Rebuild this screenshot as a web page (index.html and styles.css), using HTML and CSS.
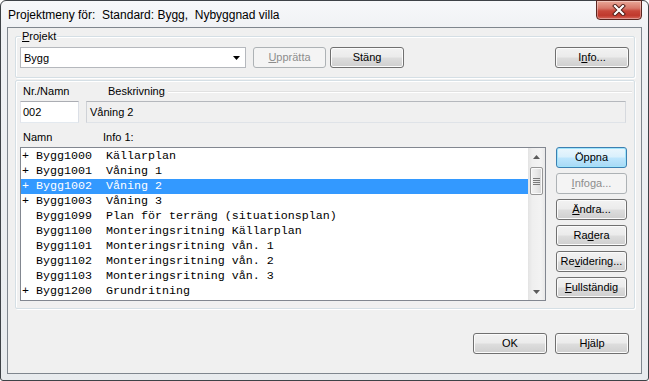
FILE: index.html
```html
<!DOCTYPE html>
<html lang="sv">
<head>
<meta charset="utf-8">
<title>Projektmeny</title>
<link rel="stylesheet" href="styles.css">
</head>
<body>
<div class="window">
  <div class="titlebar">
    <span class="title">Projektmeny för:&nbsp; Standard: Bygg,&nbsp; Nybyggnad villa</span>
    <div class="close">
      <svg width="14" height="12" viewBox="0 0 14 12">
        <path d="M3 2 L11 10 M11 2 L3 10" stroke="#4a1a14" stroke-width="4" stroke-linecap="square"/>
        <path d="M3 2 L11 10 M11 2 L3 10" stroke="#ffffff" stroke-width="2.2" stroke-linecap="square"/>
      </svg>
    </div>
  </div>
  <div class="client">
    <div class="group g1">
      <span class="glabel"><u>P</u>rojekt</span>
      <div class="row">
        <div class="combo">
          <span class="val">Bygg</span>
          <svg width="7" height="4" viewBox="0 0 7 4"><path d="M0 0 H7 L3.5 4 Z" fill="#000"/></svg>
        </div>
        <div class="btn dis upp"><u>U</u>pprätta</div>
        <div class="btn stang">Stäng</div>
        <div class="btn info">I<u>n</u>fo...</div>
      </div>
    </div>
    <div class="group g2">
      <div class="lab1">
        <span class="nr">Nr./Namn</span>
        <span>Beskrivning</span>
        <span class="etch"></span>
      </div>
      <div class="fields">
        <div class="field nrf">002</div>
        <div class="field besk">Våning 2</div>
      </div>
      <div class="lab2">
        <span class="nm">Namn</span>
        <span>Info 1:</span>
      </div>
      <div class="listrow">
        <div class="list">
          <div class="items">
            <div class="item">+ Bygg1000  Källarplan</div>
            <div class="item">+ Bygg1001  Våning 1</div>
            <div class="item sel">+ Bygg1002  Våning 2</div>
            <div class="item">+ Bygg1003  Våning 3</div>
            <div class="item">  Bygg1099  Plan för terräng (situationsplan)</div>
            <div class="item">  Bygg1100  Monteringsritning Källarplan</div>
            <div class="item">  Bygg1101  Monteringsritning vån. 1</div>
            <div class="item">  Bygg1102  Monteringsritning vån. 2</div>
            <div class="item">  Bygg1103  Monteringsritning vån. 3</div>
            <div class="item">+ Bygg1200  Grundritning</div>
          </div>
          <div class="sb">
            <div class="sb-btn"><svg width="7" height="4" viewBox="0 0 7 4"><path d="M0 4 H7 L3.5 0 Z" fill="#5b5b5b"/></svg></div>
            <div class="thumb">
              <svg width="7" height="7" viewBox="0 0 7 7"><path d="M0 0.5 H7 M0 2.5 H7 M0 4.5 H7 M0 6.5 H7" stroke="#7a7a7a" stroke-width="1"/></svg>
            </div>
            <div class="track"></div>
            <div class="sb-btn"><svg width="7" height="4" viewBox="0 0 7 4"><path d="M0 0 H7 L3.5 4 Z" fill="#5b5b5b"/></svg></div>
          </div>
        </div>
        <div class="side">
          <div class="btn def">Öppna</div>
          <div class="btn dis"><u>I</u>nfoga...</div>
          <div class="btn"><u>Ä</u>ndra...</div>
          <div class="btn">Ra<u>d</u>era</div>
          <div class="btn">Re<u>v</u>idering...</div>
          <div class="btn"><u>F</u>ullständig</div>
        </div>
      </div>
    </div>
    <div class="footer">
      <div class="btn">OK</div>
      <div class="btn">Hjälp</div>
    </div>
  </div>
</div>
</body>
</html>
```

FILE: styles.css
```css
* { box-sizing: border-box; }
html, body { margin: 0; padding: 0; }
body {
  width: 649px;
  height: 381px;
  overflow: hidden;
  background: #ffffff;
  font-family: "Liberation Sans", Arial, sans-serif;
  font-size: 11px;
  color: #000;
}
u { text-decoration: underline; text-underline-offset: 1px; }

.window {
  width: 649px;
  height: 381px;
  border: 1px solid #3e4247;
  border-radius: 6px 6px 3px 3px;
  background: linear-gradient(180deg, #f7f8fa 0px, #eff1f4 30px, #e8ebee 100%);
  display: flex;
  flex-direction: column;
}
.titlebar {
  flex: none;
  height: 26px;
  display: flex;
  align-items: flex-start;
}
.title {
  margin: 6px 0 0 7px;
  font-size: 12px;
  line-height: 16px;
  color: #000;
}
.close {
  margin: -1px 6px 0 auto;
  width: 46px;
  height: 20px;
  border: 1px solid #5b2620;
  border-radius: 0 0 4px 4px;
  background: linear-gradient(180deg, #e9a898 0%, #d7786a 40%, #c8473a 55%, #c0392d 80%, #d5665a 100%);
  box-shadow: inset 0 0 0 1px rgba(255,255,255,0.35);
  display: flex;
  align-items: center;
  justify-content: center;
}

.client {
  flex: 1;
  margin: 0 6px 6px 6px;
  border: 1px solid #7f868e;
  background: #f0f0f0;
  display: flex;
  flex-direction: column;
}

.group {
  position: relative;
  border: 1px solid #d5dfe5;
  border-radius: 2px;
  box-shadow: inset 1px 1px 0 #ffffff, 1px 1px 0 #ffffff;
}
.glabel {
  position: absolute;
  left: 5px;
  top: -7px;
  padding: 0 1px;
  line-height: 13px;
  background: #f0f0f0;
}
.g1 {
  margin: 8px 6px 0 7px;
  height: 42px;
  padding: 10px 5px 0 4px;
}
.row {
  display: flex;
  align-items: flex-start;
}
.combo {
  width: 226px;
  height: 21px;
  border: 1px solid #b5b8bd;
  background: #fff;
  display: flex;
  align-items: center;
  padding-left: 3px;
}
.combo .val { flex: 1; }
.combo svg { margin-right: 5px; }

.btn {
  width: 74px;
  height: 21px;
  border: 1px solid #707070;
  border-radius: 3px;
  background: linear-gradient(180deg, #f2f2f2 0%, #ebebeb 48%, #dddddd 52%, #cfcfcf 100%);
  box-shadow: inset 0 0 0 1px #fbfbfb;
  display: flex;
  align-items: center;
  justify-content: center;
  line-height: 13px;
  white-space: nowrap;
}
.btn.dis {
  border-color: #adb2b5;
  background: #f4f4f4;
  box-shadow: none;
  color: #8d8d8d;
}
.btn.def {
  border-color: #3c7fb1;
  background: linear-gradient(180deg, #eaf6fd 0%, #d9f0fc 48%, #bee6fd 52%, #a7d9f5 100%);
  box-shadow: inset 0 0 0 1px #9fe4fb;
}
.upp { width: 73px; margin-left: 7px; }
.stang { margin-left: 4px; }
.info { margin-left: auto; }

.g2 {
  margin: 2px 6px 0 7px;
  height: 229px;
  padding: 4px 0 0 4px;
  display: flex;
  flex-direction: column;
}
.lab1 {
  display: flex;
  align-items: center;
  height: 13px;
  line-height: 13px;
}
.lab1 .nr { margin-left: 3px; width: 85px; }
.etch {
  flex: 1;
  height: 2px;
  margin: 0 2px 0 3px;
  border-top: 1px solid #e1e1e1;
  border-bottom: 1px solid #ffffff;
}
.fields {
  display: flex;
  margin-top: 3px;
  height: 22px;
}
.field {
  height: 22px;
  border: 1px solid #abadb3;
  border-color: #abadb3 #dbdfe6 #e3e9ef #e2e3ea;
  display: flex;
  align-items: center;
}
.nrf { width: 59px; background: #fff; padding-left: 2px; }
.besk {
  width: 540px;
  margin-left: 7px;
  background: #f0f0f0;
  padding-left: 3px;
  border-color: #b5b8bd #d6d9de #dfe3e8 #cfd2d7;
}
.lab2 {
  display: flex;
  margin-top: 8px;
  height: 13px;
  line-height: 13px;
}
.lab2 .nm { margin-left: 3px; width: 80px; }

.listrow {
  display: flex;
  align-items: flex-start;
  margin-top: 3px;
  height: 154px;
}
.list {
  width: 526px;
  height: 154px;
  border: 1px solid #828790;
  background: #fff;
  display: flex;
}
.items {
  flex: 1;
  padding-top: 1px;
  font-family: "Liberation Mono", "Courier New", monospace;
  font-size: 11.67px;
}
.item {
  height: 15px;
  line-height: 15px;
  padding-left: 1px;
  white-space: pre;
}
.item.sel {
  background: #3399ff;
  color: #fff;
}
.sb {
  width: 17px;
  display: flex;
  flex-direction: column;
  background: linear-gradient(90deg, #e3e3e3 0%, #efefef 25%, #f3f3f3 75%, #e9e9e9 100%);
}
.sb-btn {
  height: 17px;
  display: flex;
  align-items: center;
  justify-content: center;
}
.thumb {
  margin: 2px 0 0 2px;
  width: 13px;
  height: 28px;
  border: 1px solid #979797;
  border-radius: 2px;
  background: linear-gradient(90deg, #f3f3f3 0%, #e8e8e8 50%, #d6d6d6 100%);
  box-shadow: inset 0 0 0 1px #fafafa;
  display: flex;
  align-items: center;
  justify-content: center;
}
.track { flex: 1; }

.side {
  display: flex;
  flex-direction: column;
  gap: 5px;
  margin-left: 10px;
}
.side .btn { width: 71px; }

.footer {
  display: flex;
  justify-content: flex-end;
  gap: 8px;
  margin-top: 24px;
  padding-right: 12px;
}
```
